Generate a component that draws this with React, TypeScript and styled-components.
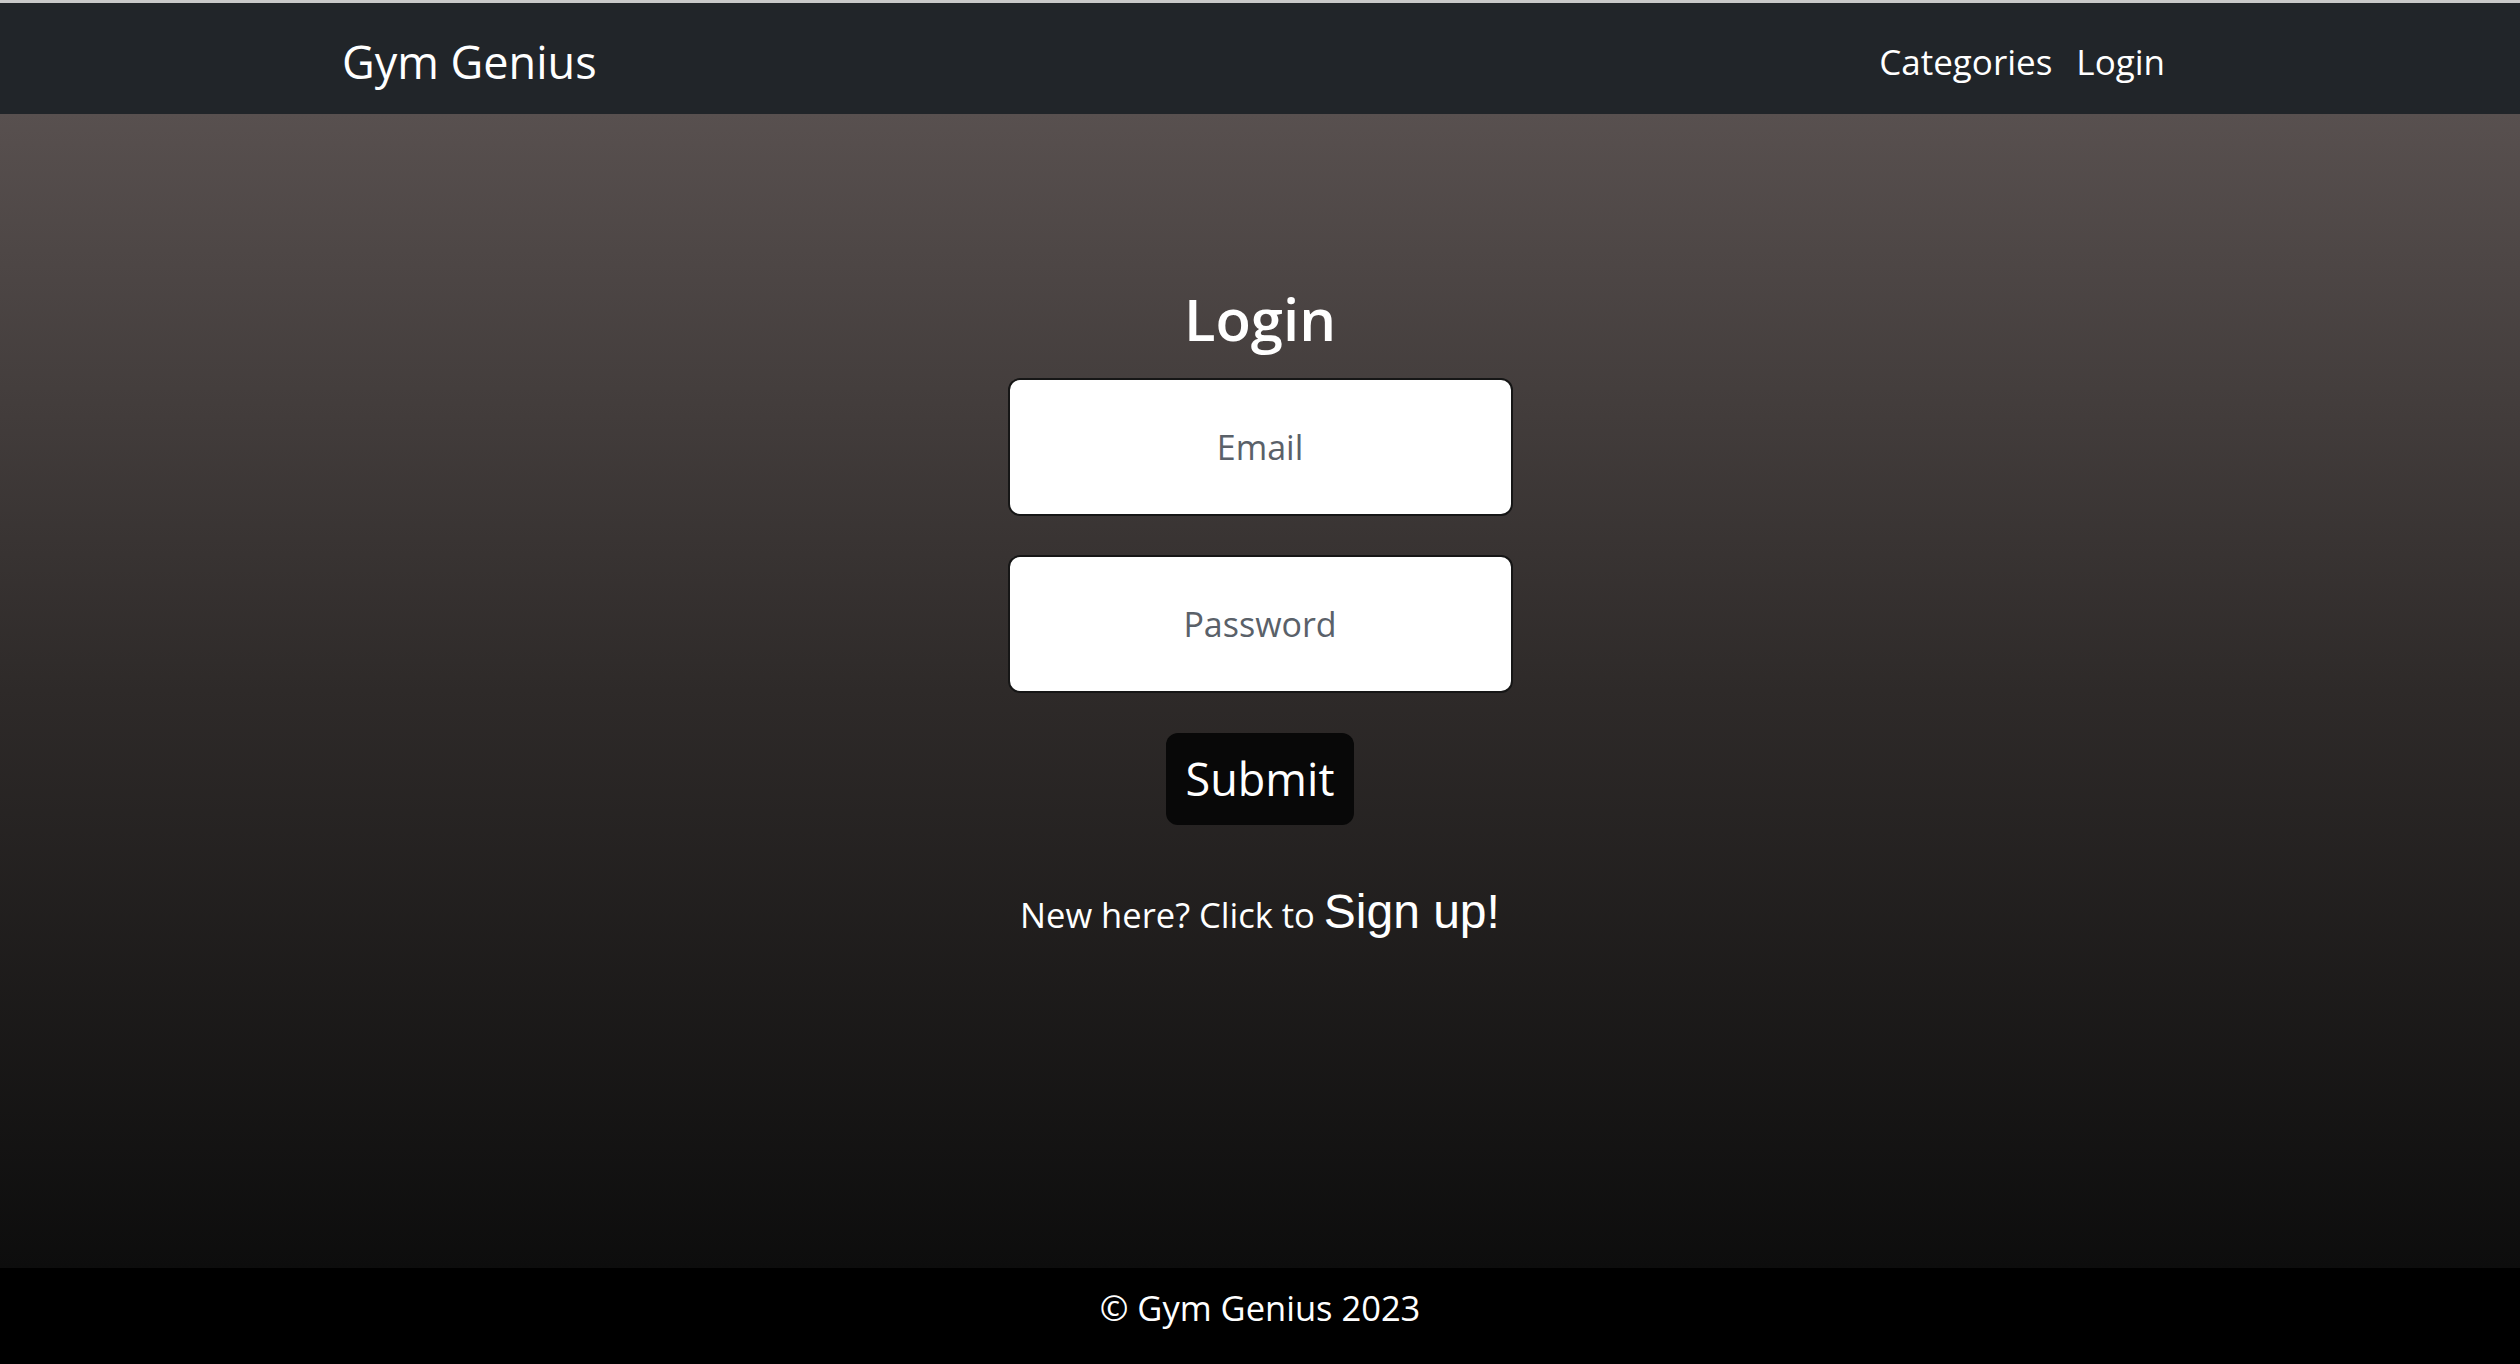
import React from 'react';
import styled, { createGlobalStyle } from 'styled-components';

const GlobalStyle = createGlobalStyle`
  html, body {
    margin: 0;
    padding: 0;
    background: #000;
  }

  body {
    font-family: "Open Sans", "Noto Sans", sans-serif;
    -webkit-font-smoothing: antialiased;
  }

  * {
    box-sizing: border-box;
  }
`;

const App: React.FC = () => {
  return (
    <Page>
      <GlobalStyle />
      <Navbar>
        <Brand href="#">Gym Genius</Brand>
        <NavLinks>
          <NavLink href="#">Categories</NavLink>
          <NavLink href="#">Login</NavLink>
        </NavLinks>
      </Navbar>

      <Main>
        <Title>Login</Title>
        <Form onSubmit={(e) => e.preventDefault()}>
          <Input type="email" placeholder="Email" />
          <Input type="password" placeholder="Password" />
          <SubmitButton type="submit">Submit</SubmitButton>
        </Form>
        <SignupText>
          New here? Click to <SignupLink href="#">Sign up!</SignupLink>
        </SignupText>
      </Main>

      <Footer>© Gym Genius 2023</Footer>
    </Page>
  );
};

const Page = styled.div`
  display: flex;
  flex-direction: column;
  min-height: 100vh;
  height: 1364px;
`;

const Navbar = styled.nav`
  flex: 0 0 auto;
  height: 114px;
  border-top: 3px solid #c9c9c9;
  background: #212529;
  display: flex;
  align-items: center;
  justify-content: space-between;
  padding: 6px 355px 0 342px;
`;

const Brand = styled.a`
  font-size: 45px;
  color: #fff;
  text-decoration: none;
  line-height: 1.2;
`;

const NavLinks = styled.div`
  display: flex;
  align-items: center;
  gap: 24px;
`;

const NavLink = styled.a`
  font-size: 35px;
  color: #fff;
  text-decoration: none;
  line-height: 1.2;
`;

const Main = styled.main`
  flex: 1 1 auto;
  display: flex;
  flex-direction: column;
  align-items: center;
  padding-top: 170px;
  background: linear-gradient(180deg, #58504f 0%, #2e2a29 50%, #0d0d0d 100%);
`;

const Title = styled.h2`
  margin: 0;
  font-size: 58px;
  font-weight: 600;
  line-height: 1.2;
  color: #fff;
`;

const Form = styled.form`
  display: flex;
  flex-direction: column;
  align-items: center;
  gap: 39px;
  margin-top: 24px;
`;

const Input = styled.input`
  width: 505px;
  height: 138px;
  border: 2px solid #161616;
  border-radius: 12px;
  background: #fff;
  font-family: "Open Sans", "Noto Sans", sans-serif;
  font-size: 34px;
  text-align: center;
  color: #212529;
  outline: none;

  &::placeholder {
    color: #5a6169;
  }
`;

const SubmitButton = styled.button`
  width: 188px;
  height: 92px;
  margin-top: 1px;
  border: none;
  border-radius: 12px;
  background: #080808;
  color: #fff;
  font-family: "Open Sans", "Noto Sans", sans-serif;
  font-size: 45px;
  cursor: pointer;
`;

const SignupText = styled.p`
  margin: 58px 0 0;
  font-size: 34.5px;
  line-height: 1.2;
  color: #fff;
`;

const SignupLink = styled.a`
  font-family: "Liberation Sans", Arial, sans-serif;
  font-size: 48px;
  color: #fff;
  text-decoration: none;
`;

const Footer = styled.footer`
  flex: 0 0 96px;
  background: #000;
  color: #fff;
  display: flex;
  align-items: center;
  justify-content: center;
  padding-bottom: 18px;
  font-size: 34.5px;
`;

export default App;
